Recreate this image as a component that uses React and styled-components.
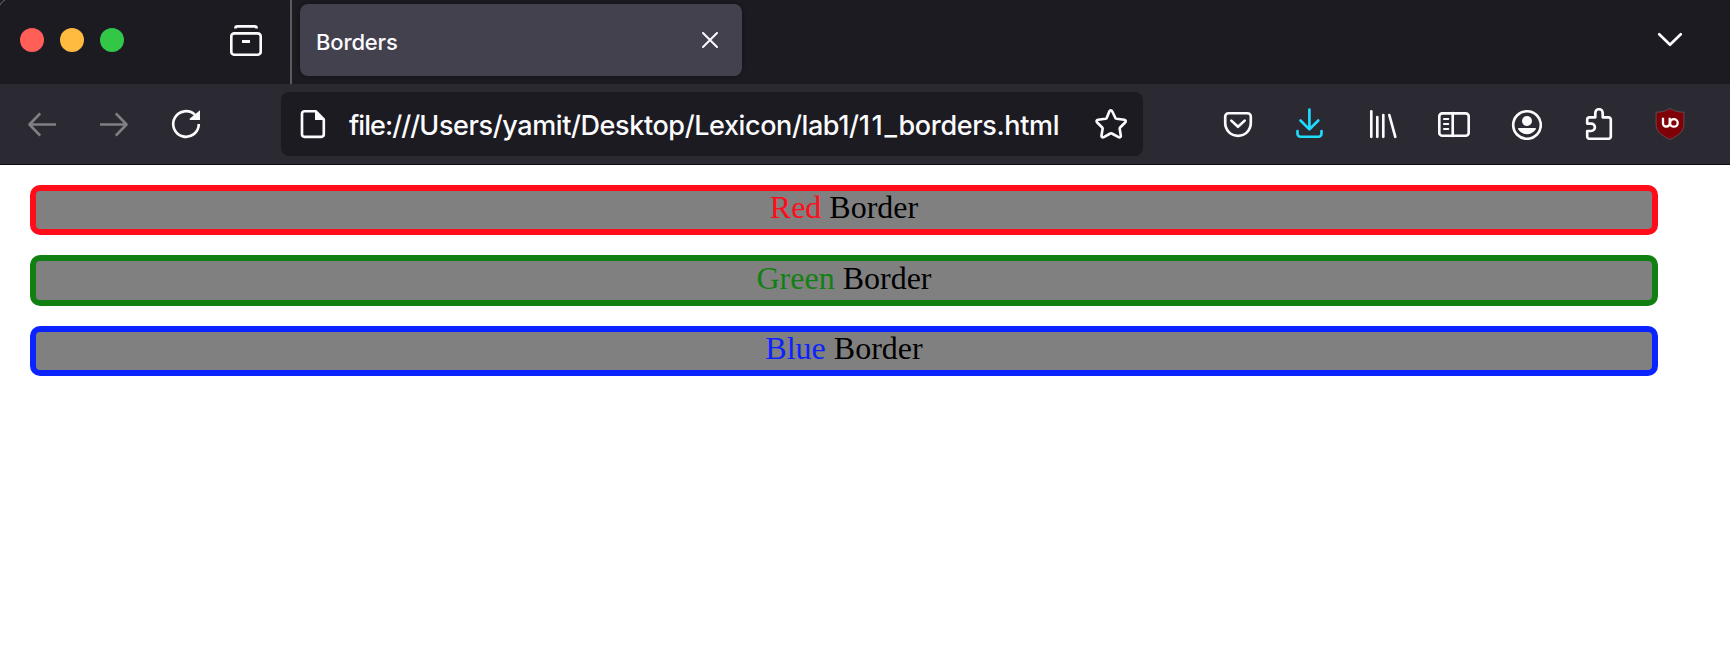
import React from "react";
import styled, { createGlobalStyle } from "styled-components";

const GlobalStyle = createGlobalStyle`
  * { box-sizing: border-box; }
  body { margin: 0; background: #fff; overflow: hidden; }
`;

const Window = styled.div`
  position: relative;
  width: 1730px;
  height: 654px;
  display: flex;
  flex-direction: column;
  background: #fff;
  font-family: Inter, "Liberation Sans", sans-serif;
  font-weight: 500;
  color: #fbfbfe;
`;

const WindowCorner = styled.svg`
  position: absolute;
  top: 0;
  left: 0;
`;

const TabBar = styled.header`
  height: 84px;
  flex: none;
  display: flex;
  background: #1c1b22;
`;

const TrafficLights = styled.div`
  display: flex;
  gap: 16px;
  padding: 28px 0 0 20px;
`;

const Light = styled.span`
  width: 24px;
  height: 24px;
  border-radius: 50%;
  background: ${(p) => p.$color};
`;

const ViewButton = styled.div`
  margin-left: 106px;
  padding-top: 24px;
  width: 60px;
`;

const Divider = styled.div`
  width: 2px;
  background: #5b5a62;
`;

const Tab = styled.div`
  width: 442px;
  height: 72px;
  margin: 4px 0 0 8px;
  padding: 0 24px 0 16px;
  display: flex;
  align-items: center;
  justify-content: space-between;
  border-radius: 8px;
  background: #42414d;
  box-shadow: 0 0 4px rgba(0, 0, 0, 0.4);
`;

const TabTitle = styled.span`
  padding-top: 4px;
  font-size: 22px;
  letter-spacing: -0.15px;
`;

const ListTabs = styled.div`
  margin: 24px 44px 0 auto;
`;

const Toolbar = styled.nav`
  height: 81px;
  flex: none;
  display: flex;
  align-items: center;
  padding: 0 24px 0 6px;
  background: #2b2a33;
  border-bottom: 1px solid #0c0c0d;
`;

const ToolButton = styled.div`
  width: 72px;
  height: 64px;
  display: grid;
  place-items: center;
  color: ${(p) => p.$color || "#fbfbfe"};
`;

const AddressBar = styled.div`
  width: 862px;
  height: 64px;
  margin: 0 59px;
  padding: 0 16px;
  display: flex;
  align-items: center;
  border-radius: 8px;
  background: #1c1b22;
`;

const Url = styled.span`
  flex: 1;
  padding: 3px 0 0 20px;
  font-size: 27px;
  white-space: nowrap;
`;

const UrlPart = styled.span`
  letter-spacing: ${(p) => p.$tracking}px;
`;

const Glyph = styled.svg`
  display: block;
  flex: none;
  fill: none;
  stroke: currentColor;
  stroke-width: ${(p) => p.$weight || 2.65};
  stroke-linecap: round;
  stroke-linejoin: round;
`;

const Page = styled.main`
  display: flex;
  flex-direction: column;
  gap: 20px;
  padding: 20px 72px 0 30px;
`;

const BorderBox = styled.div`
  height: ${(p) => p.$height}px;
  border: 6px solid ${(p) => p.$color};
  border-radius: 10px;
  background: #808080;
  color: #000;
  font: 32px "Liberation Serif", serif;
  line-height: ${(p) => (p.$height > 50 ? 34 : 32)}px;
  text-align: center;
`;

const ColorName = styled.span`
  color: ${(p) => p.$color};
`;

function Icon({ children, weight }) {
  return (
    <Glyph width="32" height="32" viewBox="0 0 32 32" $weight={weight}>
      {children}
    </Glyph>
  );
}

const icons = {
  view: (
    <>
      <path d="M5.4 4.400c0-1.500.8-2 2-2h17.200c1.200 0 2 .5 2 2" strokeLinecap="butt" />
      <rect x="1.300" y="9.300" width="29.400" height="21.400" rx="3" />
      <path d="M12 17.500h8" strokeLinecap="butt" strokeWidth="3" />
    </>
  ),
  back: <path d="M14.200 5.300 3.500 16.500l10.700 11.200M3.500 16.500H30" strokeLinecap="butt" />,
  forward: <path d="M17.800 5.300 28.500 16.500 17.800 27.700M28.500 16.500H2" strokeLinecap="butt" />,
  reload: (
    <>
      <path d="M28.800 16A12.800 12.800 0 1 1 25 6.900" strokeLinecap="butt" />
      <path d="M30 2.300V12h-9.400c-1 0-1.300-1-.7-1.600z" fill="currentColor" stroke="none" />
    </>
  ),
  file: (
    <>
      <path d="M7.500 3.200h11.200l8.100 8.200v14.900a2.500 2.500 0 0 1-2.500 2.500H7.500A2.500 2.500 0 0 1 5 26.300V5.700a2.500 2.500 0 0 1 2.500-2.500z" />
      <path d="M18 3v9h9z" fill="currentColor" stroke="none" />
    </>
  ),
  star: (
    <path d="M14.400 3.300c.6-1.400 2.200-1.400 2.800 0l3.100 6.500c.2.500.6.800 1.200.9l7.700 1c1.500.2 2 1.700.9 2.800l-5 5c-.4.400-.5.900-.4 1.400l1.100 6.700c.2 1.500-1 2.300-2.300 1.600l-6.600-3.700c-.5-.3-1.100-.3-1.600 0l-6.500 3.700c-1.300.7-2.500-.1-2.300-1.600l1.100-6.700c.1-.5 0-1-.4-1.400l-5-5c-1.100-1.100-.6-2.600.9-2.800l7.500-1c.6-.1 1-.4 1.200-.9z" />
  ),
  pocket: (
    <>
      <path d="M6.500 5.200h19a3.300 3.300 0 0 1 3.300 3.300v6.300c0 7.400-5.500 13-12.800 13s-12.800-5.600-12.800-13V8.500a3.300 3.300 0 0 1 3.300-3.300z" />
      <path d="m9.300 12.600 6.700 6.200 6.700-6.200" />
    </>
  ),
  download: (
    <>
      <path d="M15.400 1.500v19.700M6.500 12.500l8.900 8.900 8.900-8.900" />
      <path d="M3.500 23v2.700a3 3 0 0 0 3 3h18a3 3 0 0 0 3-3V23" />
    </>
  ),
  library: <path d="M5.300 3.300v25.500M11.300 9v19.800M17.300 7v21.800M23.300 7l6 21.800" />,
  sidebar: (
    <>
      <rect x="1.300" y="5.300" width="29.400" height="22.400" rx="3" />
      <path d="M14.700 5v23" />
      <path d="M6 11h4.200M6 16h4.200M6 21h4.200" strokeWidth="2.200" />
    </>
  ),
  account: (
    <>
      <circle cx="17" cy="17" r="13.800" />
      <circle cx="17" cy="13" r="5" fill="currentColor" stroke="none" />
      <path d="M9 20h16c1 0 1.300.9.700 1.600-4.300 6.300-13.100 6.300-17.400 0C7.700 20.900 8 20 9 20z" fill="currentColor" stroke="none" />
    </>
  ),
  extension: (
    <path d="M13.300 9.300V4.900a3.700 3.700 0 0 1 7.400 0v4.400H26.500a2.300 2.300 0 0 1 2.300 2.300V28.500a2.300 2.300 0 0 1-2.300 2.300H7.500a2.300 2.300 0 0 1-2.300-2.300V23h4a3.700 3.700 0 0 0 0-7.400h-4v-4a2.300 2.300 0 0 1 2.300-2.300z" />
  ),
  shield: (
    <>
      <path d="M16 .5c4.500 2.700 8 3.700 13.900 3.700v12c0 7.300-5.500 11.300-13.900 15.300C7.600 27.500 2.100 23.500 2.100 16.200v-12C8 4.200 11.500 3.200 16 .5z" fill="#800007" stroke="#66545c" strokeWidth="0.8" />
      <path d="M9 9.800v5.700a3 3 0 0 0 3 3h.5a3.200 3.200 0 0 0 3.200-3.200V9.800" stroke="#fff" strokeWidth="2.300" strokeLinecap="butt" />
      <circle cx="19.900" cy="14.900" r="3.800" stroke="#fff" strokeWidth="2.300" />
    </>
  ),
};

const navigation = [
  { name: "back", color: "#807f85" },
  { name: "forward", color: "#807f85" },
  { name: "reload" },
];

const tools = [
  { name: "pocket" },
  { name: "download", color: "#1fdcff" },
  { name: "library" },
  { name: "sidebar" },
  { name: "account" },
  { name: "extension" },
  { name: "shield" },
];

const boxes = [
  { name: "Red", color: "#ff0d1a", height: 50 },
  { name: "Green", color: "#118013", height: 51 },
  { name: "Blue", color: "#0a23ff", height: 50 },
];

const renderButton = ({ name, color }) => (
  <ToolButton key={name} $color={color}>
    <Icon>{icons[name]}</Icon>
  </ToolButton>
);

export default function App() {
  return (
    <Window>
      <GlobalStyle />
      <TabBar>
        <TrafficLights>
          <Light $color="#ff5f57" />
          <Light $color="#febb40" />
          <Light $color="#33c748" />
        </TrafficLights>
        <ViewButton>
          <Icon>{icons.view}</Icon>
        </ViewButton>
        <Divider />
        <Tab>
          <TabTitle>Borders</TabTitle>
          <Glyph width="16" height="16" viewBox="0 0 16 16" $weight={2}>
            <path d="m1 1 14 14M15 1 1 15" />
          </Glyph>
        </Tab>
        <ListTabs>
          <Icon>
            <path d="m5.200 10.200 10.800 10.600 10.800-10.600" />
          </Icon>
        </ListTabs>
      </TabBar>
      <Toolbar>
        {navigation.map(renderButton)}
        <AddressBar>
          <Icon>{icons.file}</Icon>
          <Url>
            <UrlPart $tracking={-0.95}>file:///</UrlPart>
            <UrlPart $tracking={-0.4}>Users/yamit/Desktop/Lexicon/lab1/</UrlPart>
            <UrlPart $tracking={1.6}>11_</UrlPart>
            <UrlPart $tracking={-0.35}>borders.html</UrlPart>
          </Url>
          <Icon>{icons.star}</Icon>
        </AddressBar>
        {tools.map(renderButton)}
      </Toolbar>
      <Page>
        {boxes.map(({ name, color, height }) => (
          <BorderBox key={name} $color={color} $height={height}>
            <ColorName $color={color}>{name}</ColorName> Border
          </BorderBox>
        ))}
      </Page>
      <WindowCorner width="8" height="8" viewBox="0 0 8 8">
        <path d="M0 5C1 3 3 1 5 0" fill="none" stroke="#77767b" />
      </WindowCorner>
    </Window>
  );
}
